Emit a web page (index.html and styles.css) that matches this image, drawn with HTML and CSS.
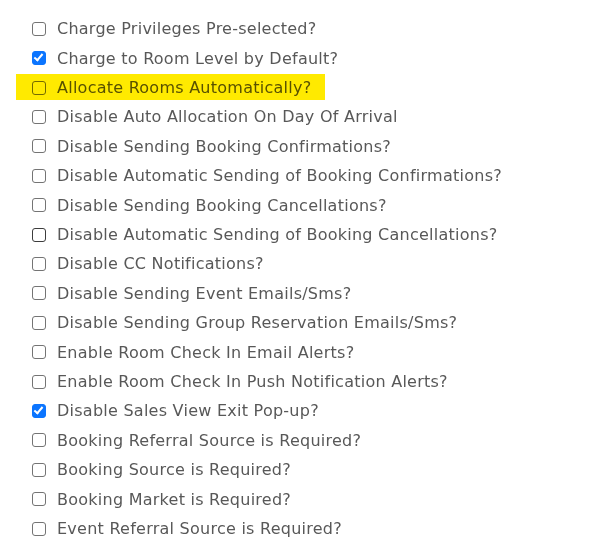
FILE: index.html
```html
<!DOCTYPE html>
<html>
<head>
<meta charset="utf-8">
<link rel="stylesheet" href="styles.css">
</head>
<body>
<ul class="options">
  <li class="row"><span class="box"></span><span class="label">Charge Privileges Pre-selected?</span></li>
  <li class="row"><span class="box checked"></span><span class="label">Charge to Room Level by Default?</span></li>
  <li class="row marked"><span class="box"></span><span class="label">Allocate Rooms Automatically?</span><span class="marker"></span></li>
  <li class="row"><span class="box"></span><span class="label">Disable Auto Allocation On Day Of Arrival</span></li>
  <li class="row"><span class="box"></span><span class="label">Disable Sending Booking Confirmations?</span></li>
  <li class="row"><span class="box"></span><span class="label">Disable Automatic Sending of Booking Confirmations?</span></li>
  <li class="row"><span class="box"></span><span class="label">Disable Sending Booking Cancellations?</span></li>
  <li class="row"><span class="box dark"></span><span class="label">Disable Automatic Sending of Booking Cancellations?</span></li>
  <li class="row"><span class="box"></span><span class="label">Disable CC Notifications?</span></li>
  <li class="row"><span class="box"></span><span class="label">Disable Sending Event Emails/Sms?</span></li>
  <li class="row"><span class="box"></span><span class="label">Disable Sending Group Reservation Emails/Sms?</span></li>
  <li class="row"><span class="box"></span><span class="label">Enable Room Check In Email Alerts?</span></li>
  <li class="row"><span class="box"></span><span class="label">Enable Room Check In Push Notification Alerts?</span></li>
  <li class="row"><span class="box checked"></span><span class="label">Disable Sales View Exit Pop-up?</span></li>
  <li class="row"><span class="box"></span><span class="label">Booking Referral Source is Required?</span></li>
  <li class="row"><span class="box"></span><span class="label">Booking Source is Required?</span></li>
  <li class="row"><span class="box"></span><span class="label">Booking Market is Required?</span></li>
  <li class="row"><span class="box"></span><span class="label">Event Referral Source is Required?</span></li>
</ul>
</body>
</html>
```
FILE: styles.css
```css
html, body {
  margin: 0;
  padding: 0;
  background: #ffffff;
  overflow: hidden;
}
.options {
  list-style: none;
  margin: 0;
  padding: 14px 0 0 32px;
  font-family: "DejaVu Sans", sans-serif;
  font-size: 16px;
  letter-spacing: 0.25px;
  color: #585858;
}
.row {
  position: relative;
  display: flex;
  align-items: center;
  height: 29.41px;
}
.box {
  flex: none;
  box-sizing: border-box;
  width: 14px;
  height: 14px;
  border: 1.5px solid #747474;
  border-radius: 3px;
  background: #ffffff;
  margin-right: 11px;
  position: relative;
}
.box.dark {
  border-color: #3c3c3c;
}
.box.checked {
  background: #0b75ff;
  border-color: #0b75ff;
}
.box.checked::after {
  content: "";
  position: absolute;
  left: 3.3px;
  top: 0px;
  width: 3px;
  height: 7px;
  border: solid #fff;
  border-width: 0 2.5px 2.5px 0;
  transform: rotate(40deg);
}
.label {
  white-space: nowrap;
}
.marker {
  position: absolute;
  left: -16px;
  top: 1.5px;
  width: 309px;
  height: 26px;
  background: #ffea00;
  mix-blend-mode: multiply;
}
```
